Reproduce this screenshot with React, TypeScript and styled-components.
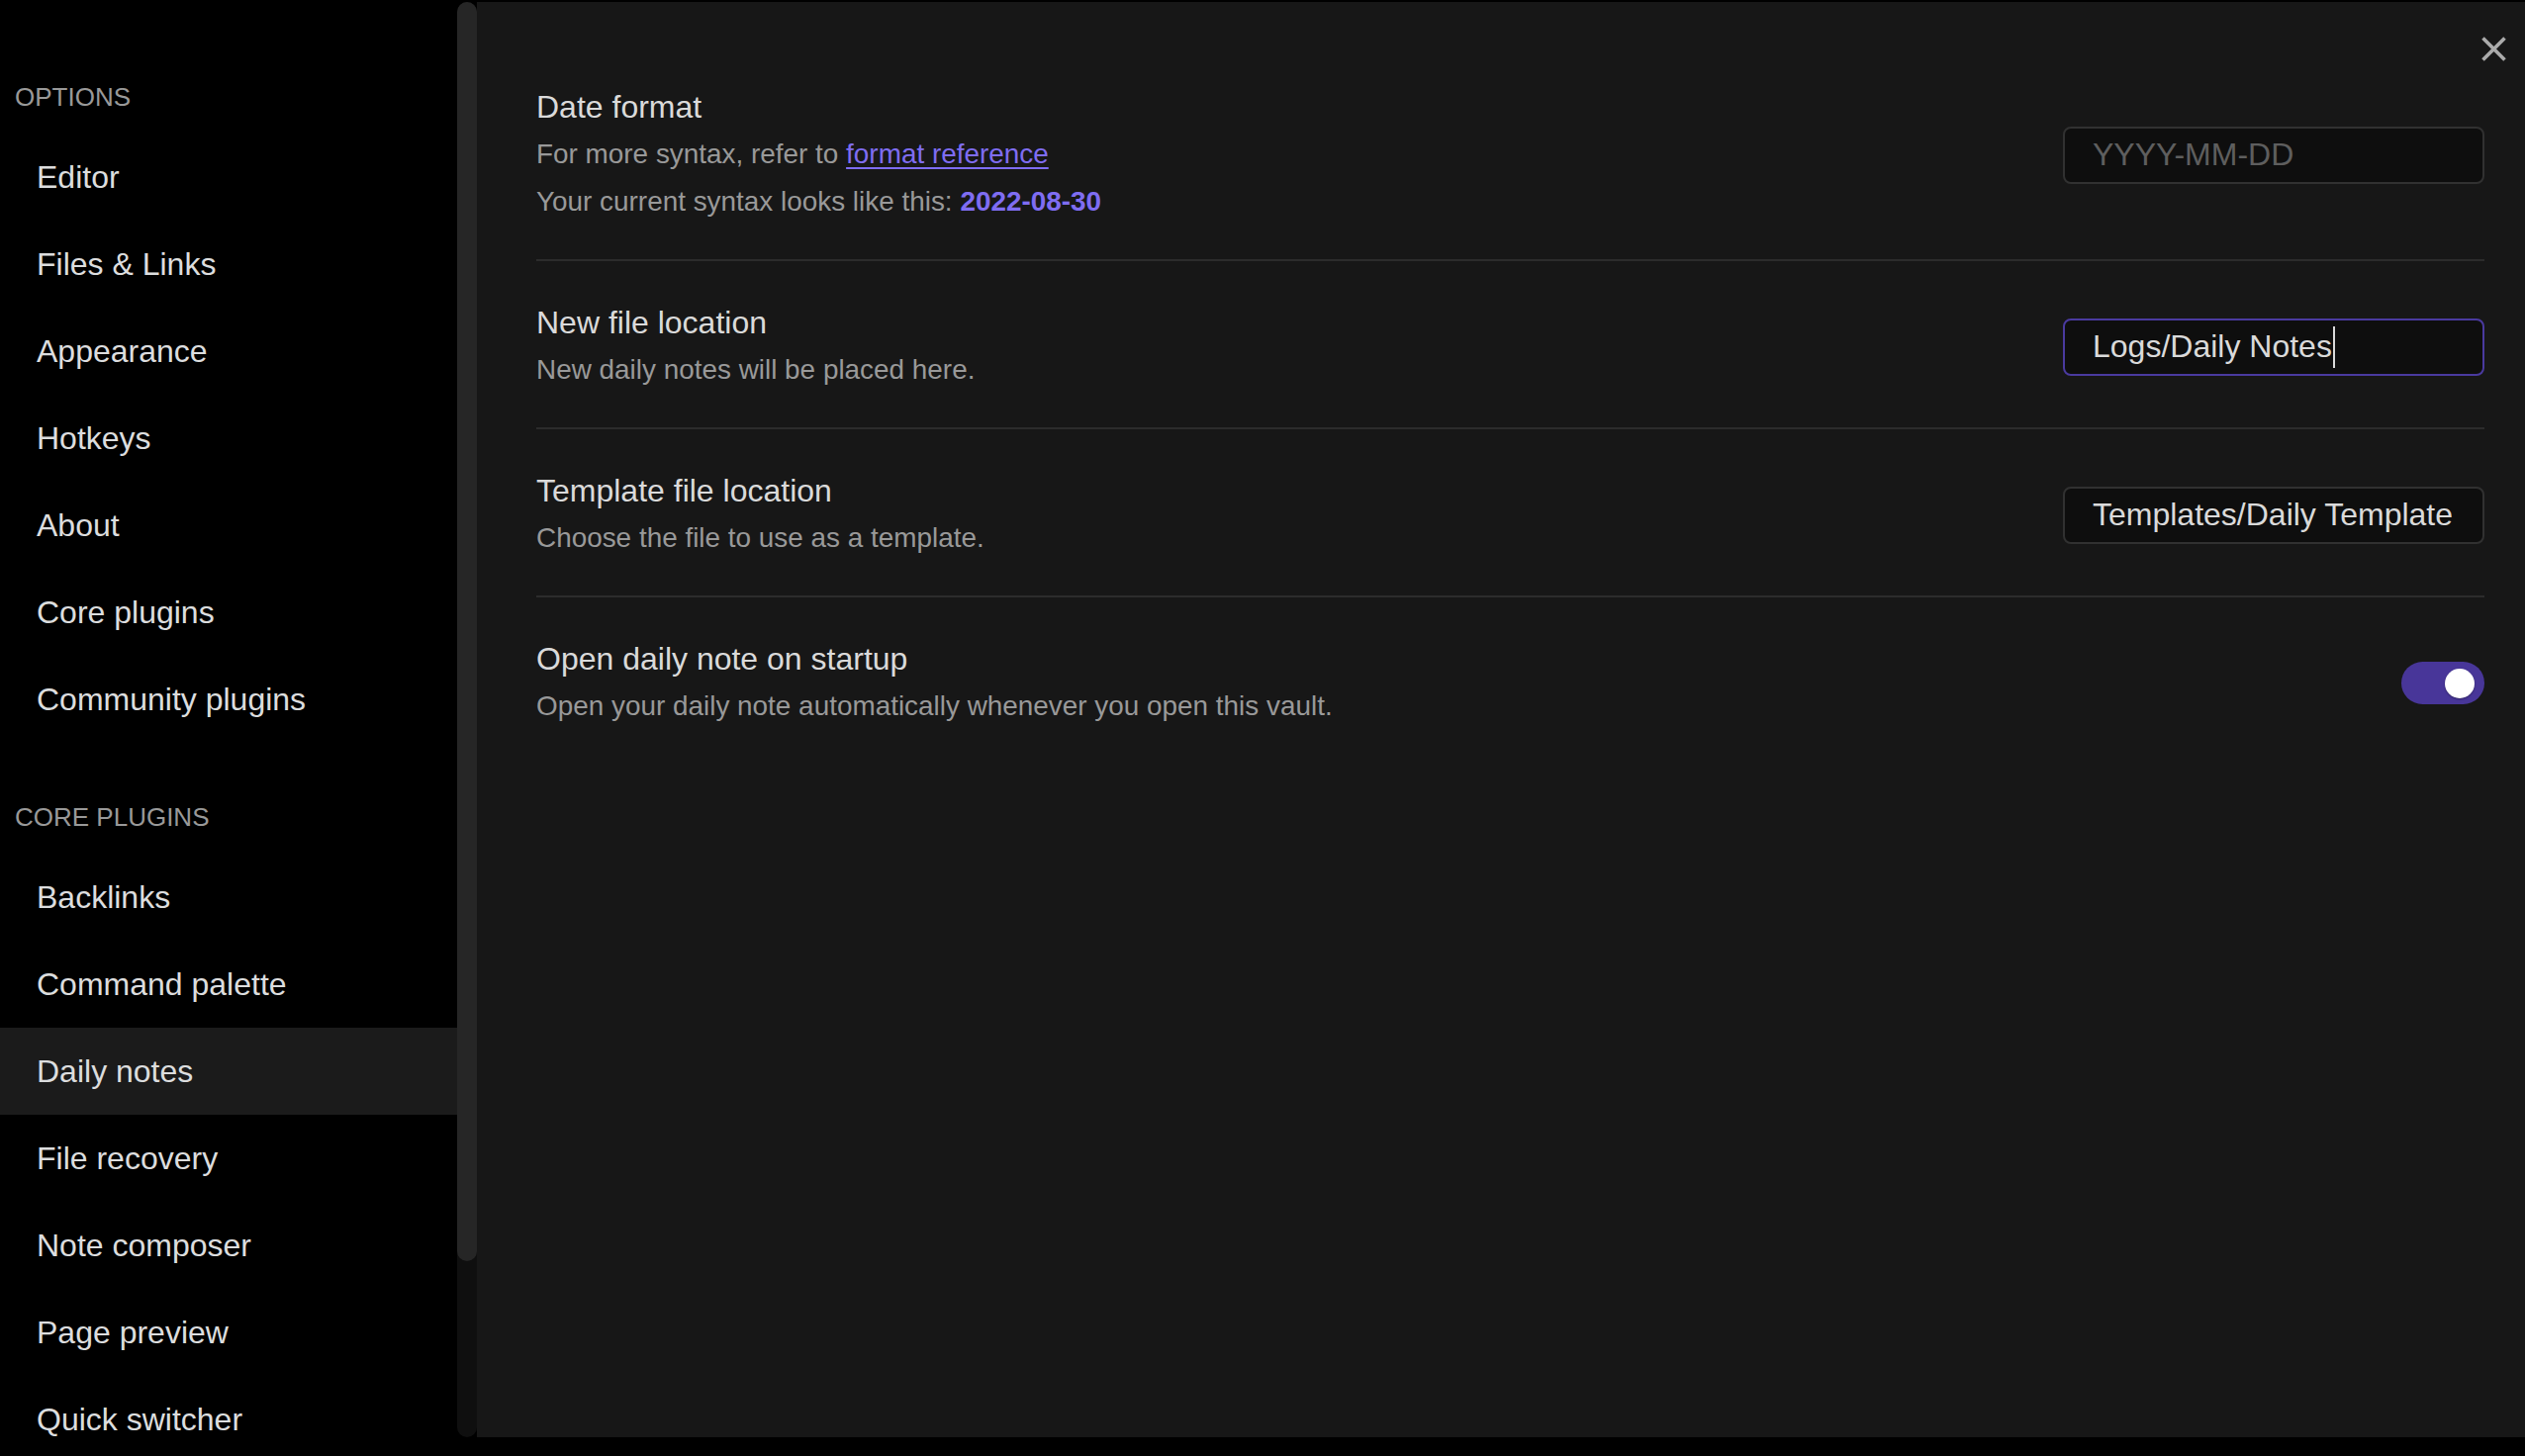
import styled, { createGlobalStyle } from 'styled-components';

const GlobalStyle = createGlobalStyle`
  html, body {
    margin: 0;
    padding: 0;
    background: #000;
  }
  body {
    font-family: "Liberation Sans", Arial, sans-serif;
    overflow: hidden;
  }
`;

const optionItems = ['Editor', 'Files & Links', 'Appearance', 'Hotkeys', 'About', 'Core plugins', 'Community plugins'];
const pluginItems = ['Backlinks', 'Command palette', 'Daily notes', 'File recovery', 'Note composer', 'Page preview', 'Quick switcher'];

const Layout = styled.div`
  display: flex;
  height: 1451px;
  padding-top: 2px;
`;

const Sidebar = styled.nav`
  width: 462px;
  flex-shrink: 0;
  background: #000;
  padding-top: 21px;
  overflow: hidden;
  box-sizing: border-box;
`;

const NavHeading = styled.div`
  margin: 57px 0 19px;
  padding-left: 15px;
  font-size: 26px;
  line-height: 36px;
  color: #999;
`;

const NavItem = styled.div<{ $active?: boolean }>`
  height: 88px;
  display: flex;
  align-items: center;
  padding-left: 37px;
  font-size: 32px;
  color: #dcddde;
  background: ${p => (p.$active ? '#1b1b1b' : 'transparent')};
`;

const ScrollTrack = styled.div`
  width: 20px;
  flex-shrink: 0;
  background: #0f0f0f;
  border-radius: 10px;
  display: flex;
  flex-direction: column;
`;

const ScrollThumb = styled.div`
  height: 1273px;
  background: #262626;
  border-radius: 10px;
`;

const Main = styled.main`
  flex: 1;
  position: relative;
  background: #171717;
`;

const CloseButton = styled.div`
  position: absolute;
  top: 35px;
  right: 19px;
  width: 25px;
  height: 25px;
  color: #ababab;
`;

const Settings = styled.div`
  padding: 44px 41px 0 60px;
`;

const SettingRow = styled.div`
  display: flex;
  align-items: center;
  gap: 40px;
  padding: 39px 0 34px;

  & + & {
    border-top: 2px solid #2c2c2c;
  }
`;

const SettingInfo = styled.div`
  flex: 1;
`;

const SettingName = styled.div`
  font-size: 32px;
  line-height: 47px;
  color: #dadada;
`;

const SettingDesc = styled.div`
  font-size: 27.9px;
  line-height: 48px;
  color: #999;
`;

const Link = styled.a`
  color: #7f6df2;
  text-decoration: underline;
  text-decoration-thickness: 2px;
  text-underline-offset: 4px;
`;

const Accent = styled.span`
  color: #7f6df2;
  font-weight: 600;
`;

const TextField = styled.div<{ $focused?: boolean; $placeholder?: boolean }>`
  width: 426px;
  height: 58px;
  box-sizing: border-box;
  flex-shrink: 0;
  display: flex;
  align-items: center;
  padding: 0 28px;
  border: 2px solid ${p => (p.$focused ? '#4a3a9f' : '#313131')};
  border-radius: 8px;
  background: #0e0e0e;
  font-size: 32px;
  white-space: nowrap;
  color: ${p => (p.$placeholder ? '#5e5e5e' : '#dadada')};
`;

const Caret = styled.span`
  display: inline-block;
  width: 2px;
  height: 42px;
  margin-left: 1px;
  background: #dadada;
`;

const Toggle = styled.div<{ $on?: boolean }>`
  width: 84px;
  height: 43px;
  flex-shrink: 0;
  box-sizing: border-box;
  padding: 0 10px;
  border-radius: 22px;
  display: flex;
  align-items: center;
  justify-content: ${p => (p.$on ? 'flex-end' : 'flex-start')};
  background: ${p => (p.$on ? '#483699' : '#3a3a3a')};
`;

const Knob = styled.span`
  width: 30px;
  height: 30px;
  border-radius: 50%;
  background: #fff;
  box-shadow: 0 1px 2px rgba(0, 0, 0, 0.35);
`;

export default function App() {
  return (
    <>
      <GlobalStyle />
      <Layout>
        <Sidebar>
          <NavHeading>OPTIONS</NavHeading>
          {optionItems.map(item => (
            <NavItem key={item}>{item}</NavItem>
          ))}
          <NavHeading>CORE PLUGINS</NavHeading>
          {pluginItems.map(item => (
            <NavItem key={item} $active={item === 'Daily notes'}>{item}</NavItem>
          ))}
        </Sidebar>
        <ScrollTrack>
          <ScrollThumb />
        </ScrollTrack>
        <Main>
          <CloseButton>
            <svg width="25" height="25" viewBox="0 0 25 25">
              <path d="M1.5 1.5 23.5 23.5M23.5 1.5 1.5 23.5" stroke="currentColor" strokeWidth="3.6" fill="none" />
            </svg>
          </CloseButton>
          <Settings>
            <SettingRow>
              <SettingInfo>
                <SettingName>Date format</SettingName>
                <SettingDesc>
                  For more syntax, refer to <Link>format reference</Link>
                </SettingDesc>
                <SettingDesc>
                  Your current syntax looks like this: <Accent>2022-08-30</Accent>
                </SettingDesc>
              </SettingInfo>
              <TextField $placeholder>YYYY-MM-DD</TextField>
            </SettingRow>
            <SettingRow>
              <SettingInfo>
                <SettingName>New file location</SettingName>
                <SettingDesc>New daily notes will be placed here.</SettingDesc>
              </SettingInfo>
              <TextField $focused>
                Logs/Daily Notes
                <Caret />
              </TextField>
            </SettingRow>
            <SettingRow>
              <SettingInfo>
                <SettingName>Template file location</SettingName>
                <SettingDesc>Choose the file to use as a template.</SettingDesc>
              </SettingInfo>
              <TextField>Templates/Daily Template</TextField>
            </SettingRow>
            <SettingRow>
              <SettingInfo>
                <SettingName>Open daily note on startup</SettingName>
                <SettingDesc>Open your daily note automatically whenever you open this vault.</SettingDesc>
              </SettingInfo>
              <Toggle $on>
                <Knob />
              </Toggle>
            </SettingRow>
          </Settings>
        </Main>
      </Layout>
    </>
  );
}
